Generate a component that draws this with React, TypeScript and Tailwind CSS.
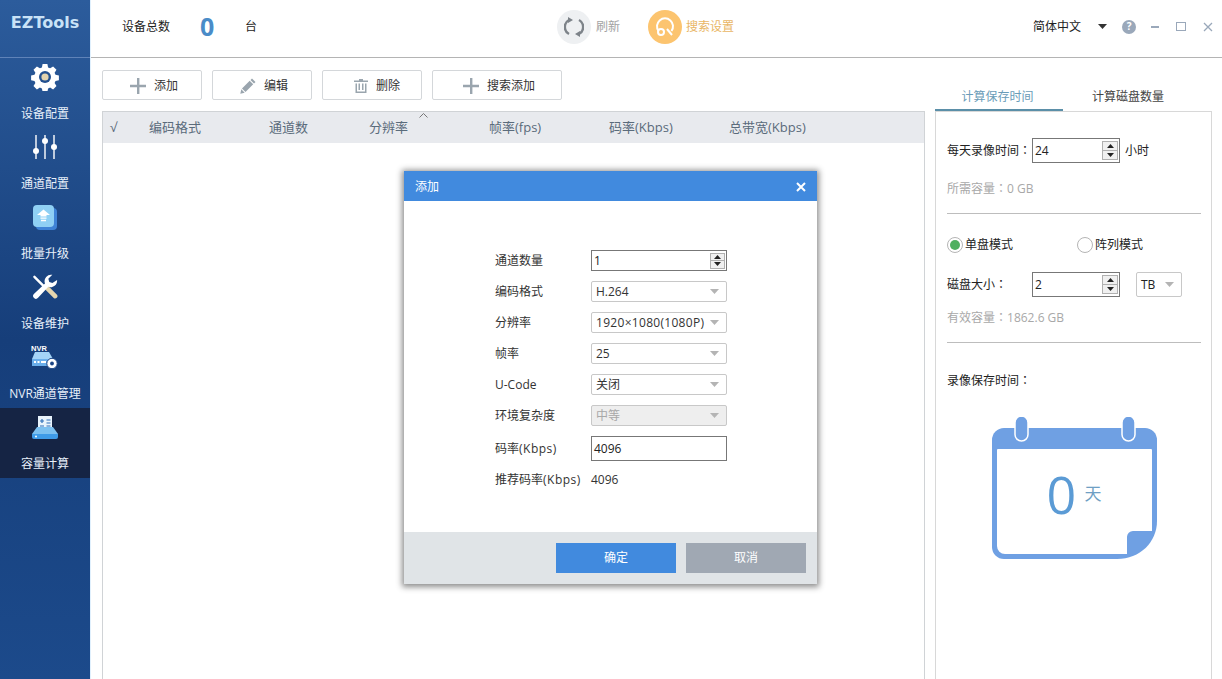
import { ReactNode } from "react";

const font = "font-['Open_Sans','Noto_Sans_CJK_SC',sans-serif]";

function GearIcon() {
  return (
    <svg width="28" height="28" viewBox="0 0 28 28">
      <path
        fill="#fff"
        d="M11.6 1.5h4.8l.7 3.4 2 .9 3-1.9 3.4 3.4-1.9 3 .9 2 3.4.7v4.8l-3.4.7-.9 2 1.9 3-3.4 3.4-3-1.9-2 .9-.7 3.4h-4.8l-.7-3.4-2-.9-3 1.9-3.4-3.4 1.9-3-.9-2-3.4-.7v-4.8l3.4-.7.9-2-1.9-3 3.4-3.4 3 1.9 2-.9z"
        transform="translate(0 -.5)"
      />
      <circle cx="14" cy="14" r="6" fill="#23508f" />
      <circle cx="14" cy="14" r="3.6" fill="#e2d3ae" />
    </svg>
  );
}

function SliderIcon() {
  return (
    <svg width="24" height="26" viewBox="0 0 24 26">
      <path stroke="#fff" strokeWidth="1.4" d="M3 1v24M12 1v24M21 1v24" />
      <circle cx="3" cy="17" r="3" fill="#fff" />
      <circle cx="12" cy="7" r="3" fill="#fff" />
      <circle cx="21" cy="13" r="3" fill="#fff" />
    </svg>
  );
}

function UpgradeIcon() {
  return (
    <svg width="24" height="25" viewBox="0 0 24 25">
      <rect x="3" y="3" width="21" height="22" rx="4" fill="#3f83d6" />
      <rect x="0" y="0" width="21" height="22" rx="4" fill="#8fd0f4" />
      <path fill="#fff" d="M10.5 4.5 17 10h-3.5v1.4h-6V10H4zM7.5 12.4h6v1.4h-6zM8 14.8h5v1.4H8z" />
    </svg>
  );
}

function ToolsIcon() {
  return (
    <svg width="26" height="26" viewBox="0 0 28 28">
      <path stroke="#fff" strokeWidth="2.6" strokeLinecap="round" d="m2.6 3 10 10" />
      <path fill="#e6d6ae" d="m14 16.500 3.500-3.500 9.400 9.400a2.500 2.500 0 0 1-3.500 3.500z" />
      <path
        fill="#fff"
        d="M27 6.400a7 7 0 0 1-9.400 7.400L6.500 25.600a3 3 0 0 1-4.500-4L14 10.200a7 7 0 0 1 7.900-9.300L17.600 5.200l1 3.400 3.400 1z"
      />
    </svg>
  );
}

function NvrIcon() {
  return (
    <svg width="28" height="27" viewBox="0 0 28 27">
      <text x="0" y="7" fontSize="7.500" fontWeight="700" fill="#fff" fontFamily="Liberation Sans, sans-serif">NVR</text>
      <path fill="#a5d4f7" d="M4 8h14l4 7H1z" />
      <rect x="1" y="15" width="22" height="7" fill="#6aaeea" />
      <path fill="#fff" d="M3 17h2v2H3zM6.500 17h2v2h-2zM10 17h5v2h-5z" />
      <circle cx="21" cy="19.500" r="5.200" fill="#fff" stroke="#1b4484" strokeWidth="1" />
      <circle cx="21" cy="19.500" r="1.900" fill="#1b4484" />
    </svg>
  );
}

function CalcIcon() {
  return (
    <svg width="26" height="24" viewBox="0 0 26 24" className="mt-[2px]">
      <path fill="#e8f3fc" d="M6 0h14v14H6z" />
      <path stroke="#2f6fb8" strokeWidth="1.200" d="M8 5h4M10 3v4M14.500 4h4M14.500 7h4M8 10h4M14.500 10h4" />
      <path fill="#7cc0f0" d="M5 11h16l5 7H0z" />
      <path fill="#3f9be8" d="M0 18h26v3a2 2 0 0 1-2 2H2a2 2 0 0 1-2-2z" />
      <circle cx="4" cy="20.500" r="1" fill="#fff" />
    </svg>
  );
}

function MenuItem({ icon, label, active }: { icon: ReactNode; label: string; active?: boolean }) {
  return (
    <div className={`h-[70px] flex flex-col items-center ${active ? "bg-[#152444]" : ""}`}>
      <div className="h-[38px] w-full flex items-center justify-center">{icon}</div>
      <div className="mt-[9px] text-[12px] leading-[18px] text-[#e8f0fa] whitespace-nowrap">{label}</div>
    </div>
  );
}

function ToolButton({ icon, label, width }: { icon: ReactNode; label: string; width: string }) {
  return (
    <div className={`${width} h-[30px] pt-[1px] rounded-[2px] border border-[#d4d7da] bg-white flex items-center justify-center gap-[8px] text-[12px] text-[#333]`}>
      {icon}
      <span>{label}</span>
    </div>
  );
}

function PlusIcon() {
  return (
    <svg width="16" height="16" viewBox="0 0 16 16">
      <path fill="#9aa5ae" d="M7 0h2.400v6.800H16v2.400H9.400V16H7V9.200H0V6.800h7z" />
    </svg>
  );
}

function Arrow({ color = "#b4b4b4" }: { color?: string }) {
  return (
    <svg width="9" height="5" viewBox="0 0 9 5">
      <path fill={color} d="M0 0h9L4.500 5z" />
    </svg>
  );
}

function Spinner({ small }: { small?: boolean }) {
  return (
    <div className={`${small ? "w-[15px] h-[16px]" : "w-[16px] h-[19px]"} border border-[#b0b0b0] bg-[#f0f0f0] flex flex-col`}>
      <div className="flex-1 flex items-center justify-center border-b border-[#b0b0b0]">
        <svg width="7" height="4" viewBox="0 0 7 4"><path fill="#222" d="M3.500 0 7 4H0z" /></svg>
      </div>
      <div className="flex-1 flex items-center justify-center">
        <svg width="7" height="4" viewBox="0 0 7 4"><path fill="#222" d="M0 0h7L3.500 4z" /></svg>
      </div>
    </div>
  );
}

function NumberBox({ value, width, height, small }: { value: string; width: string; height: string; small?: boolean }) {
  return (
    <div className={`${width} ${height} border border-[#777] bg-white flex items-center justify-between pl-[2px] pr-[1px] text-[12px] text-[#222]`}>
      <span>{value}</span>
      <Spinner small={small} />
    </div>
  );
}

function SelectBox({ value, disabled, spaced }: { value: string; disabled?: boolean; spaced?: boolean }) {
  return (
    <div className={`w-[136px] h-[21px] rounded-[2px] border border-[#c8c8c8] flex items-center justify-between pl-[4px] pr-[7px] text-[12px] ${disabled ? "bg-[#eeeeee] text-[#a8a8a8]" : "bg-white text-[#333]"}`}>
      <span className={spaced ? "tracking-[0.3px]" : ""}>{value}</span>
      <Arrow />
    </div>
  );
}

function FormRow({ label, children }: { label: ReactNode; children: ReactNode }) {
  return (
    <div className="flex items-center">
      <div className="w-[96px] text-[12px] text-[#333] whitespace-nowrap">{label}</div>
      {children}
    </div>
  );
}

function Kbps() {
  return <span className="tracking-[0.5px]">(Kbps)</span>;
}

function Colon() {
  return <span className="leading-[0] font-['Noto_Sans_CJK_TC',sans-serif]">：</span>;
}

function AddDialog() {
  return (
    <div className="absolute left-[404px] top-[171px] w-[413px] h-[413px] bg-white flex flex-col shadow-[0_1px_6px_2px_rgba(0,0,0,0.45)]">
      <div className="h-[30px] bg-[#418ade] flex items-center justify-between pt-[2px] pl-[11px] pr-[11px] text-[12px] text-white">
        <span>添加</span>
        <svg width="10" height="10" viewBox="0 0 10 10">
          <path stroke="#fff" strokeWidth="2" d="m1 1 8 8M9 1 1 9" />
        </svg>
      </div>
      <div className="flex-1 pt-[49px] pl-[91px] flex flex-col gap-[10px]">
        <FormRow label="通道数量">
          <NumberBox value="1" width="w-[136px]" height="h-[21px]" small />
        </FormRow>
        <FormRow label="编码格式"><SelectBox value="H.264" /></FormRow>
        <FormRow label="分辨率"><SelectBox value="1920×1080(1080P)" spaced /></FormRow>
        <FormRow label="帧率"><SelectBox value="25" /></FormRow>
        <FormRow label="U-Code"><SelectBox value="关闭" /></FormRow>
        <FormRow label="环境复杂度"><SelectBox value="中等" disabled /></FormRow>
        <FormRow label={<>码率<Kbps /></>}>
          <div className="w-[136px] h-[25px] border border-[#777] flex items-center pl-[2px] text-[12px] text-[#222]">4096</div>
        </FormRow>
        <div className="-mt-[2px]">
          <FormRow label={<>推荐码率<Kbps /></>}>
            <span className="text-[12px] leading-[21px] text-[#333]">4096</span>
          </FormRow>
        </div>
      </div>
      <div className="h-[52px] bg-[#e0e4e7] flex justify-end items-start pt-[11px] pr-[11px] gap-[10px] text-[12px] text-white">
        <div className="w-[120px] h-[30px] bg-[#418ade] flex items-center justify-center">确定</div>
        <div className="w-[120px] h-[30px] bg-[#a0a8b3] flex items-center justify-center">取消</div>
      </div>
    </div>
  );
}

function Calendar() {
  return (
    <div className="relative w-[165px] h-[142px] mt-[27px] mx-auto">
      <svg width="165" height="142" viewBox="0 0 165 142" className="absolute left-0 top-0">
        <path
          fill="#6fa0e3"
          d="M12 11h141a12 12 0 0 1 12 12v81c0 21-17 38-40 38H12a12 12 0 0 1-12-12V23a12 12 0 0 1 12-12z"
        />
        <path fill="#fff" d="M6 32h153a1 1 0 0 1 1 1v81h-19a6 6 0 0 0-6 6v17H13a8 8 0 0 1-8-8V33a1 1 0 0 1 1-1z" />
        <rect x="23" y="-1" width="13" height="25" rx="6.500" fill="#6fa0e3" stroke="#fff" strokeWidth="1.500" />
        <rect x="130" y="-1" width="13" height="25" rx="6.500" fill="#6fa0e3" stroke="#fff" strokeWidth="1.500" />
      </svg>
      <span className="absolute left-[55px] top-[44px] text-[52px] leading-[66px] text-[#5b9bd5]">0</span>
      <span className="absolute left-[93px] top-[65px] text-[17px] leading-[24px] text-[#6f9fc4]">天</span>
    </div>
  );
}

function RightPanel() {
  return (
    <div className="w-[277px] flex flex-col pt-[29px] text-[12px]">
      <div className="flex h-[24px]">
        <div className="w-[128px] pr-[3px] border-b-2 border-[#5b8fa8] text-center leading-[20px] text-[#6a9cb8]">计算保存时间</div>
        <div className="w-[130px] text-center leading-[20px] text-[#444]">计算磁盘数量</div>
      </div>
      <div className="flex-1 border-x border-t border-[#d8d8d8] pl-[11px] pr-[10px] pt-[26px] text-[#222]">
        <div className="flex items-center">
          <span className="w-[85px] whitespace-nowrap">每天录像时间<Colon /></span>
          <NumberBox value="24" width="w-[88px]" height="h-[25px]" />
          <span className="ml-[5px]">小时</span>
        </div>
        <div className="mt-[17px] leading-[18px] text-[#a8a8a8]">所需容量<Colon />0 GB</div>
        <div className="mt-[15px] h-px bg-[#bdbdbd]" />
        <div className="mt-[22px] flex items-center h-[18px]">
          <span className="w-[16px] h-[16px] rounded-full border border-[#b5b5b5] flex items-center justify-center">
            <span className="w-[10px] h-[10px] rounded-full bg-[#4fb060]" />
          </span>
          <span className="ml-[2px] w-[112px]">单盘模式</span>
          <span className="w-[16px] h-[16px] rounded-full border border-[#b5b5b5]" />
          <span className="ml-[2px]">阵列模式</span>
        </div>
        <div className="mt-[18px] flex items-center">
          <span className="w-[85px]">磁盘大小<Colon /></span>
          <NumberBox value="2" width="w-[88px]" height="h-[25px]" />
          <div className="ml-[16px] w-[46px] h-[25px] rounded-[2px] border border-[#c8c8c8] flex items-center justify-between pl-[4px] pr-[7px]">
            <span>TB</span>
            <Arrow />
          </div>
        </div>
        <div className="mt-[12px] leading-[18px] text-[#a8a8a8]">有效容量<Colon />1862.6 GB</div>
        <div className="mt-[15px] h-px bg-[#bdbdbd]" />
        <div className="mt-[29px] leading-[18px]">录像保存时间<Colon /></div>
        <Calendar />
      </div>
    </div>
  );
}

export default function App() {
  return (
    <div className={`relative w-[1222px] h-[679px] overflow-hidden flex bg-white ${font}`}>
      <aside className="w-[90px] shrink-0 bg-gradient-to-b from-[#2c5c9c] via-[#163e7a] to-[#1c4a8b] flex flex-col">
        <div className="h-[58px] border-b border-[#5f83b8] pt-[12px] text-center text-[16px] leading-[22px] font-bold font-['DejaVu_Sans',sans-serif] text-[#c9e2f7]">
          EZTools
        </div>
        <MenuItem icon={<GearIcon />} label="设备配置" />
        <MenuItem icon={<SliderIcon />} label="通道配置" />
        <MenuItem icon={<UpgradeIcon />} label="批量升级" />
        <MenuItem icon={<ToolsIcon />} label="设备维护" />
        <MenuItem icon={<NvrIcon />} label="NVR通道管理" />
        <MenuItem icon={<CalcIcon />} label="容量计算" active />
      </aside>

      <main className="flex-1 flex flex-col border-l border-[#e0f0fd]">
        <header className="h-[58px] shrink-0 pb-[4px] border-b border-[#b4b4b4] flex items-center text-[12px] text-[#222]">
          <span className="ml-[31px]">设备总数</span>
          <span className="ml-[30px] w-[16px] text-[25px] font-bold text-[#4a8cc8]">0</span>
          <span className="ml-[29px]">台</span>
          <div className="ml-[300px] flex items-center">
            <span className="w-[34px] h-[34px] rounded-full bg-[#eef0f2] flex items-center justify-center">
              <svg width="20" height="22" viewBox="0 0 20 22" fill="none">
                <path stroke="#7d8389" strokeWidth="2.400" d="M5 4a8 8 0 0 0 0 14M15 18a8 8 0 0 0 0-14" />
                <path fill="#7d8389" d="M4 1v6l5-3zM16 21v-6l-5 3z" />
              </svg>
            </span>
            <span className="ml-[5px] text-[#a3a3a3]">刷新</span>
            <span className="ml-[28px] w-[34px] h-[34px] rounded-full bg-[#fcc46f] flex items-center justify-center">
              <svg width="22" height="22" viewBox="0 0 22 22" fill="none">
                <path stroke="#fff" strokeWidth="2" d="M4.500 15A8 8 0 1 1 17.500 15" />
                <circle cx="7" cy="16" r="3" stroke="#fff" strokeWidth="2" />
                <path stroke="#fff" strokeWidth="2" d="m13 13 5 6" />
              </svg>
            </span>
            <span className="ml-[4px] text-[#e9b665]">搜索设置</span>
          </div>
          <span className="ml-[299px]">简体中文</span>
          <span className="ml-[17px] flex">
            <Arrow color="#333" />
          </span>
          <span className="ml-[15px] w-[14px] h-[14px] rounded-full bg-[#9aa8ba] flex items-center justify-center text-[10px] font-bold text-white">?</span>
          <span className="ml-[15px] w-[8px] h-[2px] bg-[#9aa8ba]" />
          <span className="ml-[17px] w-[10px] h-[9px] border border-[#9aa8ba]" />
          <svg width="10" height="10" viewBox="0 0 10 10" className="ml-[17px]">
            <path stroke="#9aa8ba" strokeWidth="1.300" d="m1 1 8 8M9 1 1 9" />
          </svg>
        </header>

        <div className="flex-1 flex pl-[11px]">
          <div className="w-[823px] flex flex-col pt-[12px]">
            <div className="flex gap-[10px]">
              <ToolButton width="w-[100px] pl-[4px]" label="添加" icon={<PlusIcon />} />
              <ToolButton
                width="w-[100px] pl-[4px]"
                label="编辑"
                icon={
                  <svg width="16" height="16" viewBox="0 0 16 16">
                    <path fill="#9aa5ae" d="M12 .5 15.500 4 14 5.500 10.500 2zM9.700 2.800l3.500 3.500-7.700 7.700-3.500-3.500zM1.300 11.300l3.400 3.400-4.400 1z" />
                  </svg>
                }
              />
              <ToolButton
                width="w-[100px] pl-[10px]"
                label="删除"
                icon={
                  <svg width="14" height="14" viewBox="0 0 14 14">
                    <path fill="#9aa5ae" d="M5 0h4v1.500h5V3H0V1.500h5zM1.500 4.500H3v8h8v-8h1.500V14h-11zM4.500 4.500H6v6.500H4.500zM8 4.500h1.500v6.500H8z" />
                  </svg>
                }
              />
              <ToolButton width="w-[130px] pl-[4px]" label="搜索添加" icon={<PlusIcon />} />
            </div>
            <div className="mt-[11px] flex-1 border-x border-t border-[#d0d3d6] flex flex-col">
              <div className="relative h-[31px] bg-[#e8eaee] flex items-center text-[13px] text-[#5a6b7b]">
                <span className="w-[46px] pl-[7px]">√</span>
                <span className="w-[120px]">编码格式</span>
                <span className="w-[100px]">通道数</span>
                <span className="w-[120px]">分辨率</span>
                <span className="w-[120px]">帧率(fps)</span>
                <span className="w-[120px]">码率(Kbps)</span>
                <span>总带宽(Kbps)</span>
                <svg width="9" height="5" viewBox="0 0 9 5" fill="none" className="absolute left-[316px] top-[1px]">
                  <path stroke="#777" d="m.5 4.500 4-4 4 4" />
                </svg>
              </div>
            </div>
          </div>
          <div className="w-[10px]" />
          <RightPanel />
        </div>
      </main>

      <AddDialog />
    </div>
  );
}
